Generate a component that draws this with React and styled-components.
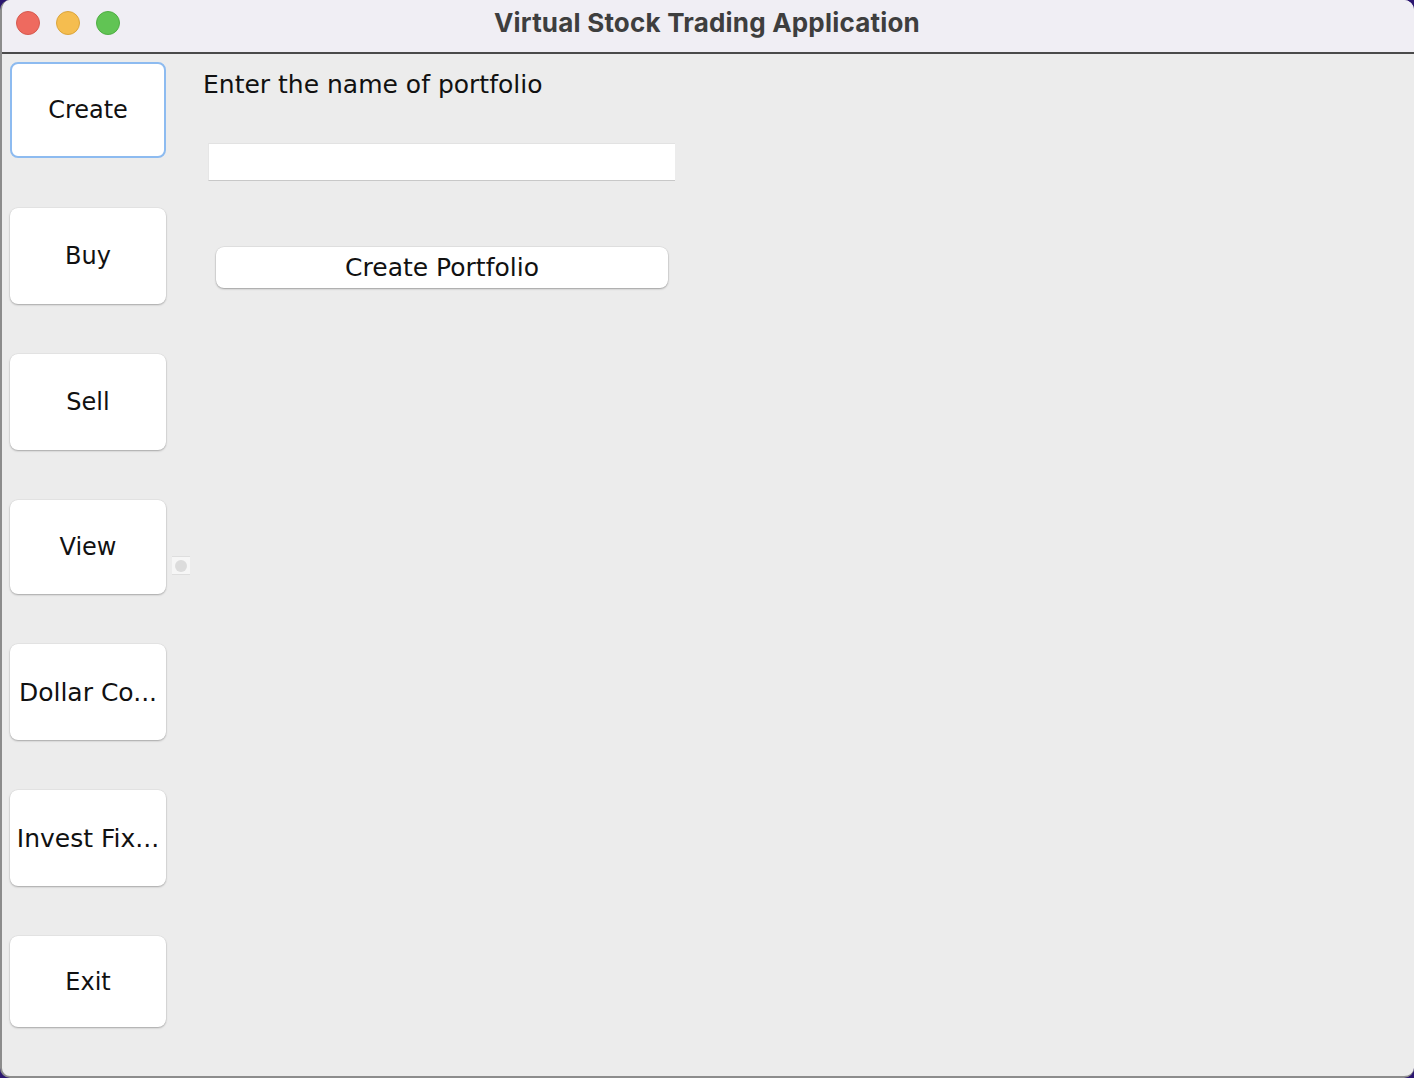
import React from "react";
import styled, { createGlobalStyle } from "styled-components";

const GlobalStyle = createGlobalStyle`
  html, body {
    margin: 0;
    padding: 0;
    background: #2b1670;
  }
  * {
    box-sizing: border-box;
  }
`;

const Window = styled.div`
  width: 1414px;
  height: 1078px;
  display: flex;
  flex-direction: column;
  background: #ececec;
  border-radius: 10px;
  overflow: hidden;
  border-left: 2px solid #8c8c8c;
  border-bottom: 2px solid #8c8c8c;
`;

const TitleBar = styled.div`
  position: relative;
  height: 54px;
  flex-shrink: 0;
  display: flex;
  align-items: center;
  justify-content: center;
  background: #f0eef4;
  border-bottom: 2px solid #4a4a4a;
  margin-left: -2px;
`;

const Lights = styled.div`
  position: absolute;
  left: 16px;
  top: 11px;
  display: flex;
  gap: 16px;
`;

const Light = styled.span`
  width: 24px;
  height: 24px;
  border-radius: 50%;
  background: ${(p) => p.color};
  border: 1px solid ${(p) => p.edge};
`;

const Title = styled.h1`
  margin: 0 0 8px;
  font-family: Inter, "Liberation Sans", sans-serif;
  font-weight: 700;
  font-size: 26px;
  color: #3e3e3e;
  letter-spacing: 0.2px;
`;

const Body = styled.div`
  flex: 1;
  display: flex;
  font-family: "DejaVu Sans", "Liberation Sans", sans-serif;
  color: #111;
`;

const Sidebar = styled.nav`
  display: flex;
  flex-direction: column;
  gap: 50px;
  padding: 8px 0 0 8px;
`;

const SideButton = styled.button`
  width: 156px;
  height: ${(p) => p.h || 96}px;
  padding: 0;
  background: #fff;
  border: ${(p) => (p.focused ? "2px solid #8dbbf0" : "none")};
  border-radius: 8px;
  box-shadow: ${(p) =>
    p.focused ? "none" : "0 1px 2px rgba(0,0,0,0.28), 0 0 0 0.5px rgba(0,0,0,0.06)"};
  font-family: inherit;
  font-size: ${(p) => p.fs || 24}px;
  color: #111;
  white-space: nowrap;
  overflow: visible;
  display: flex;
  align-items: center;
  justify-content: center;
`;

const RadioColumn = styled.div`
  width: 18px;
  margin-left: 6px;
  padding-top: 502px;
`;

const RadioBox = styled.div`
  width: 18px;
  height: 19px;
  background: #f6f6f6;
  border-top: 1px solid #dedede;
  border-bottom: 1px solid #dedede;
  display: flex;
  align-items: center;
  justify-content: center;
`;

const RadioDot = styled.span`
  width: 12px;
  height: 12px;
  border-radius: 50%;
  background: #dcdcdc;
`;

const Main = styled.main`
  display: flex;
  flex-direction: column;
  padding: 13px 0 0 13px;
`;

const Label = styled.div`
  font-size: 25px;
  line-height: 36px;
  color: #111;
`;

const TextField = styled.input`
  width: 467px;
  height: 38px;
  margin: 40px 0 0 5px;
  background: #fff;
  border: none;
  border-top: 1px solid #e2e2e2;
  border-left: 1px solid #e6e6e6;
  border-bottom: 1px solid #c8c8c8;
  outline: none;
  font-family: inherit;
  font-size: 22px;
`;

const ActionButton = styled.button`
  width: 452px;
  height: 41px;
  margin: 66px 0 0 13px;
  background: #fff;
  border: none;
  border-radius: 8px;
  box-shadow: 0 1px 2px rgba(0,0,0,0.3), 0 0 0 0.5px rgba(0,0,0,0.08);
  font-family: inherit;
  font-size: 25px;
  color: #111;
  padding: 0;
`;

const menu = [
  { label: "Create", focused: true },
  { label: "Buy" },
  { label: "Sell" },
  { label: "View", h: 94 },
  { label: "Dollar Co...", fs: 25 },
  { label: "Invest Fix...", fs: 25 },
  { label: "Exit", h: 91 },
];

export default function App() {
  return (
    <>
      <GlobalStyle />
      <Window>
        <TitleBar>
          <Lights>
            <Light color="#ee6a5f" edge="#d65a4f" />
            <Light color="#f5bd4f" edge="#dba53c" />
            <Light color="#61c454" edge="#4fae43" />
          </Lights>
          <Title>Virtual Stock Trading Application</Title>
        </TitleBar>
        <Body>
          <Sidebar>
            {menu.map((m) => (
              <SideButton key={m.label} h={m.h} fs={m.fs} focused={m.focused}>
                {m.label}
              </SideButton>
            ))}
          </Sidebar>
          <RadioColumn>
            <RadioBox>
              <RadioDot />
            </RadioBox>
          </RadioColumn>
          <Main>
            <Label>Enter the name of portfolio</Label>
            <TextField type="text" />
            <ActionButton>Create Portfolio</ActionButton>
          </Main>
        </Body>
      </Window>
    </>
  );
}
